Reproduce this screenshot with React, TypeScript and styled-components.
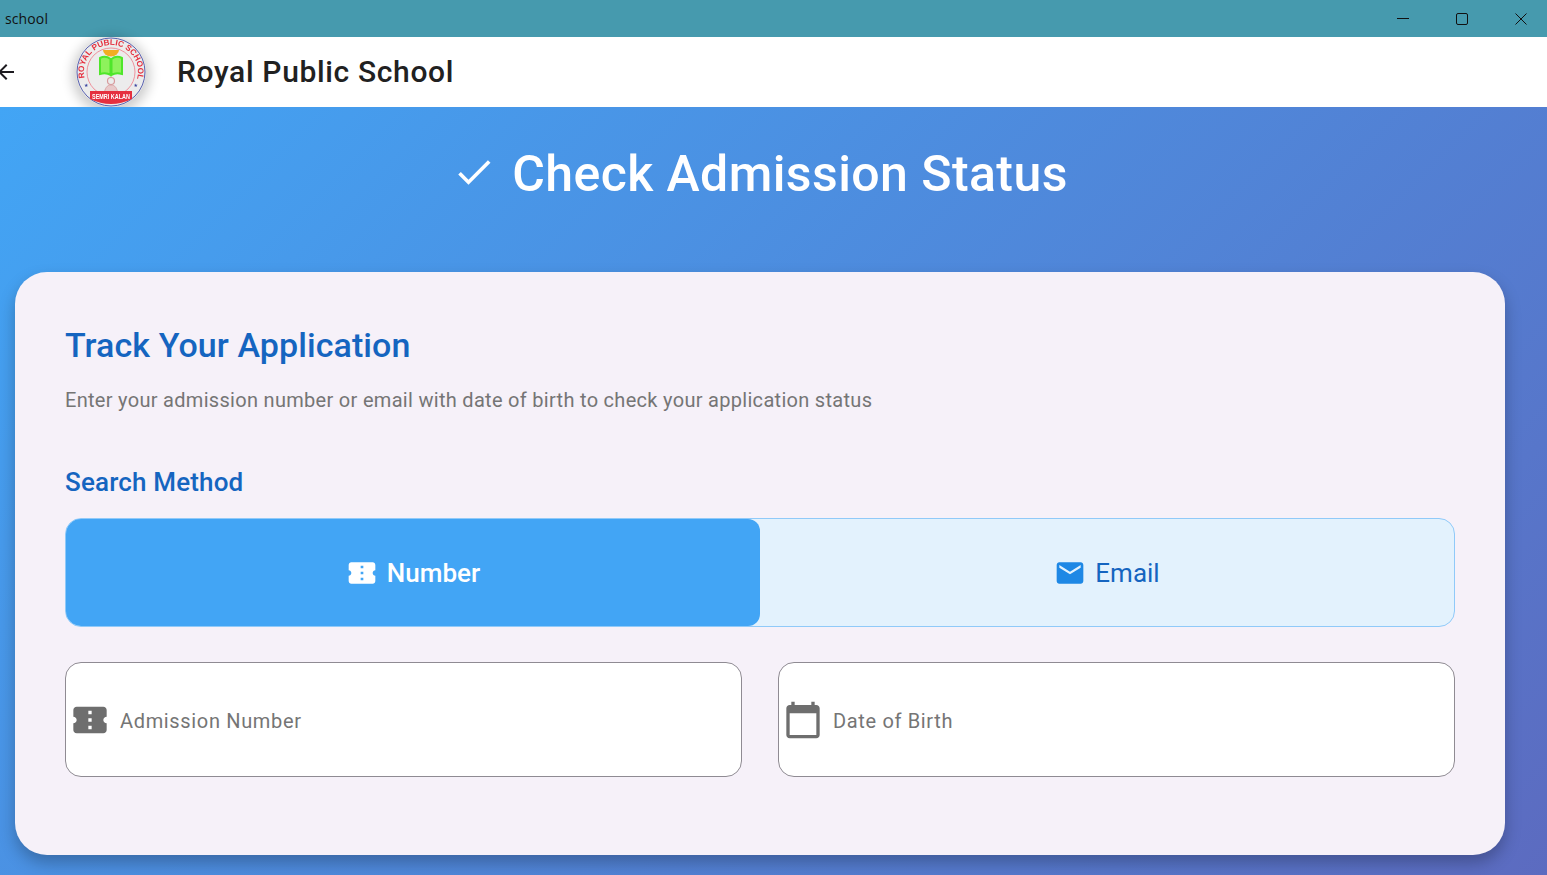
import React from "react";
import styled, { createGlobalStyle } from "styled-components";

const Global = createGlobalStyle`
  html, body { margin: 0; padding: 0; height: 100%; overflow: hidden; }
  body { font-family: Roboto, "Noto Sans", sans-serif; background: #fff; }
  * { box-sizing: border-box; }
`;

const Page = styled.div`
  width: 1547px; height: 875px; display: flex; flex-direction: column; overflow: hidden;
`;
const TitleBar = styled.div`
  height: 37px; flex: none; background: #469aae; display: flex; align-items: center;
  justify-content: space-between; padding-left: 5px;
  font-family: "Open Sans", "Noto Sans", sans-serif; font-size: 14px; letter-spacing: .12px; color: #111;
`;
const WindowControls = styled.div`display: flex; align-items: center; height: 100%; margin-right: -3px;`;
const WindowButton = styled.div`
  width: 59px; height: 100%; display: flex; align-items: center; justify-content: center; color: #111;
`;
const AppBar = styled.header`
  height: 70px; flex: none; background: #fff; display: flex; align-items: center;
`;
const BackIcon = styled.svg`width: 24px; height: 24px; margin-left: -6px; fill: #1d1b20; flex: none;`;
const LogoWrap = styled.div`
  width: 70px; height: 70px; margin-left: 58px; flex: none; border-radius: 50%;
  box-shadow: 0 3px 12px 4px rgba(0,0,0,.2); background: #e9e9e9;
  svg { display: block; filter: blur(.3px); }
`;
const AppTitle = styled.h1`
  margin: 0 0 0 31px; font-size: 30px; line-height: 70px; font-weight: 475; color: #212121; letter-spacing: .65px;
`;
const Main = styled.main`
  flex: 1; background: linear-gradient(135deg, #42a5f5, #5c6bc0); padding: 0 42px 20px 15px;
  display: flex; flex-direction: column;
`;
const Hero = styled.div`
  height: 165px; flex: none; display: flex; align-items: flex-start; justify-content: center;
  gap: 16px; padding: 34px 0 0;
`;
const HeroIcon = styled.svg`width: 44px; height: 44px; fill: #fff; margin-top: 9px; flex: none;`;
const HeroTitle = styled.h2`
  margin: 0; font-size: 50px; line-height: 66px; font-weight: 475; color: #fff; letter-spacing: .42px;
`;
const Card = styled.section`
  flex: 1; background: #f6f1f9; border-radius: 32px; padding: 50px 50px 0;
  box-shadow: 0 8px 16px rgba(0,0,0,.25); display: flex; flex-direction: column;
`;
const CardTitle = styled.h3`
  margin: 0; font-size: 34px; line-height: 46px; font-weight: 475; color: #1565c0; letter-spacing: .08px;
`;
const CardDesc = styled.p`
  margin: 18px 0 0; font-size: 20px; line-height: 28px; color: #757575; letter-spacing: .3px;
`;
const SectionLabel = styled.h4`
  margin: 52px 0 0; font-size: 26px; line-height: 32px; font-weight: 475; color: #1565c0; letter-spacing: .16px;
`;
const Toggle = styled.div`
  margin-top: 20px; height: 109px; display: grid; grid-template-columns: 1fr 1fr;
  border: 1.5px solid #90caf9; border-radius: 16px; background: #e3f2fd; overflow: hidden;
`;
const ToggleOption = styled.div<{ $active?: boolean }>`
  display: flex; align-items: center; justify-content: center; gap: 9px;
  font-size: 26px; font-weight: ${p => (p.$active ? 550 : 400)};
  color: ${p => (p.$active ? "#fff" : "#1565c0")};
  background: ${p => (p.$active ? "#42a5f5" : "transparent")};
  border-radius: ${p => (p.$active ? "0 12px 12px 0" : "0")};
  svg { width: 32px; height: 32px; fill: ${p => (p.$active ? "#fff" : "#1e88e5")}; flex: none; }
`;
const Fields = styled.div`
  margin-top: 35px; display: grid; grid-template-columns: 1fr 1fr; gap: 36px;
`;
const Field = styled.div`
  height: 115px; background: #fff; border: 1px solid #8f8b93; border-radius: 16px;
  display: flex; align-items: center; padding: 0 0 0 4px; gap: 10px;
  svg { width: 40px; height: 40px; fill: #6e6e6e; flex: none; }
`;
const Placeholder = styled.span`
  font-size: 20px; color: #757575; letter-spacing: .66px; margin-top: 3px;
`;

const ticket = "M22 10V6c0-1.11-.9-2-2-2H4c-1.1 0-1.99.89-1.99 2v4c1.1 0 1.99.9 1.99 2s-.89 2-2 2v4c0 1.1.9 2 2 2h16c1.1 0 2-.9 2-2v-4c-1.1 0-2-.9-2-2s.9-2 2-2zm-9 7.5h-2v-2h2v2zm0-4.5h-2v-2h2v2zm0-4.5h-2v-2h2v2z";

function Logo() {
  return (
    <svg width="70" height="70" viewBox="0 0 70 70">
      <circle cx="35" cy="35" r="34" fill="#ececec" stroke="#5a62b0" strokeWidth="1" />
      <circle cx="35" cy="35" r="24" fill="none" stroke="#ef6a78" strokeWidth=".7" />
      <defs><path id="logoArc" d="M8.700 41 A27 27 0 1 1 61.300 41" /></defs>
      <text fontFamily="Liberation Sans, sans-serif" fontWeight="700" fontSize="8.200" fill="#e5303f">
        <textPath href="#logoArc">ROYAL PUBLIC SCHOOL</textPath>
      </text>
      <path d="M27 13a8 6.500 0 0 0 16 0z" fill="#f2ad22" />
      <path d="M24 21c4-2 8-1 10.500 1v16c-3-2-7-2-10.500-1z M46 21c-4-2-8-1-10.500 1v16c3-2 7-2 10.500-1z" fill="#8ef25c" stroke="#4fe62a" strokeWidth="2" />
      <circle cx="35" cy="44" r="3.500" fill="none" stroke="#d79a9c" strokeWidth="1.200" />
      <path d="M28 57c1-6 3-9 7-9s6 3 7 9z" fill="#e8c9c9" stroke="#d79a9c" strokeWidth=".8" />
      <path d="M14 54l42 0v8q-21 10-42 0z" fill="#e5303f" />
      <text x="35" y="62" textAnchor="middle" fontFamily="Liberation Sans, sans-serif" fontWeight="700" fontSize="6.500" fill="#fff" textLength="38" lengthAdjust="spacingAndGlyphs">SEMRI KALAN</text>
      <text x="8" y="50" fontFamily="DejaVu Sans, sans-serif" fontSize="5" fill="#3d47a0">★</text>
      <text x="57.500" y="50" fontFamily="DejaVu Sans, sans-serif" fontSize="5" fill="#3d47a0">★</text>
    </svg>
  );
}

export default function App() {
  return (
    <Page>
      <Global />
      <TitleBar>
        <span>school</span>
        <WindowControls>
          <WindowButton>
            <svg width="12" height="12" viewBox="0 0 12 12"><path d="M0 5.500h12" stroke="currentColor" fill="none" /></svg>
          </WindowButton>
          <WindowButton>
            <svg width="12" height="12" viewBox="0 0 12 12"><rect x=".5" y=".5" width="11" height="11" rx="1.500" stroke="currentColor" fill="none" /></svg>
          </WindowButton>
          <WindowButton>
            <svg width="12" height="12" viewBox="0 0 12 12"><path d="M.5.500l11 11M11.500.500l-11 11" stroke="currentColor" fill="none" /></svg>
          </WindowButton>
        </WindowControls>
      </TitleBar>
      <AppBar>
        <BackIcon viewBox="0 0 24 24"><path d="M20 11H7.830l5.590-5.590L12 4l-8 8 8 8 1.410-1.410L7.830 13H20v-2z" /></BackIcon>
        <LogoWrap><Logo /></LogoWrap>
        <AppTitle>Royal Public School</AppTitle>
      </AppBar>
      <Main>
        <Hero>
          <HeroIcon viewBox="0 0 24 24"><path d="M9 16.170L4.830 12l-1.420 1.410L9 19 21 7l-1.410-1.410z" /></HeroIcon>
          <HeroTitle>Check Admission Status</HeroTitle>
        </Hero>
        <Card>
          <CardTitle>Track Your Application</CardTitle>
          <CardDesc>Enter your admission number or email with date of birth to check your application status</CardDesc>
          <SectionLabel>Search Method</SectionLabel>
          <Toggle>
            <ToggleOption $active>
              <svg viewBox="0 0 24 24"><path d={ticket} /></svg>
              Number
            </ToggleOption>
            <ToggleOption>
              <svg viewBox="0 0 24 24"><path d="M20 4H4c-1.100 0-1.990.9-1.990 2L2 18c0 1.100.9 2 2 2h16c1.100 0 2-.9 2-2V6c0-1.100-.9-2-2-2zm0 4l-8 5-8-5V6l8 5 8-5v2z" /></svg>
              Email
            </ToggleOption>
          </Toggle>
          <Fields>
            <Field>
              <svg viewBox="0 0 24 24"><path d={ticket} /></svg>
              <Placeholder>Admission Number</Placeholder>
            </Field>
            <Field>
              <svg viewBox="0 0 24 24"><path d="M20 3h-1V1h-2v2H7V1H5v2H4c-1.100 0-2 .9-2 2v16c0 1.100.9 2 2 2h16c1.100 0 2-.9 2-2V5c0-1.100-.9-2-2-2zm0 18H4V8h16v13z" /></svg>
              <Placeholder>Date of Birth</Placeholder>
            </Field>
          </Fields>
        </Card>
      </Main>
    </Page>
  );
}
